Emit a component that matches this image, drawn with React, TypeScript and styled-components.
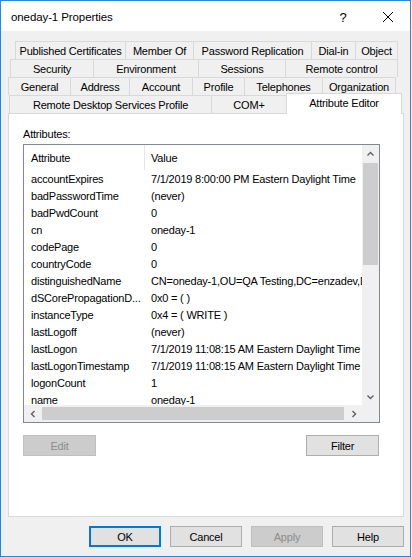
import React from "react";
import styled, { createGlobalStyle } from "styled-components";

const GlobalStyle = createGlobalStyle`
  html, body { margin: 0; padding: 0; background: #ffffff; }
  body { font-family: "Liberation Sans", Arial, sans-serif; }
  * { box-sizing: border-box; }
`;

const Window = styled.div`
  width: 411px;
  height: 557px;
  border: 1px solid #2b88d8;
  background: #f0f0f0;
  display: flex;
  flex-direction: column;
  font-family: "Liberation Sans", Arial, sans-serif;
  font-size: 11px;
  letter-spacing: -0.2px;
  color: #000;
`;

const TitleBar = styled.div`
  height: 30px;
  background: #ffffff;
  display: flex;
  align-items: center;
  padding: 2px 0 0 10px;
`;

const Title = styled.div`
  flex: 1;
  font-size: 11.5px;
  letter-spacing: -0.1px;
`;

const HelpGlyph = styled.div`
  width: 12px;
  font-size: 13px;
  margin-right: 33px;
  text-align: center;
`;

const CloseBox = styled.div`
  width: 12px;
  height: 12px;
  margin-right: 16px;
  display: flex;
`;

const Body = styled.div`
  padding: 10px 6px 0 7px;
  display: flex;
  flex-direction: column;
`;

const TabRow = styled.div<{ $indent: number }>`
  display: flex;
  height: 18px;
  padding-left: ${(p) => p.$indent}px;
`;

const Tab = styled.div<{ $w: number; $selected?: boolean }>`
  width: ${(p) => p.$w}px;
  flex: none;
  height: ${(p) => (p.$selected ? 21 : 18)}px;
  margin-top: ${(p) => (p.$selected ? -2 : 0)}px;
  margin-right: -1px;
  border: 1px solid #d9d9d9;
  border-bottom: none;
  background: ${(p) => (p.$selected ? "#ffffff" : "#f0f0f0")};
  position: ${(p) => (p.$selected ? "relative" : "static")};
  z-index: ${(p) => (p.$selected ? 1 : 0)};
  display: flex;
  align-items: ${(p) => (p.$selected ? "flex-start" : "center")};
  padding-top: ${(p) => (p.$selected ? 2 : 0)}px;
  justify-content: center;
  white-space: nowrap;
  line-height: 14px;
`;

const Panel = styled.div`
  height: 404px;
  background: #ffffff;
  border: 1px solid #d9d9d9;
  padding: 13px 24px 0 14px;
  display: flex;
  flex-direction: column;
`;

const Label = styled.div`
  height: 17px;
  line-height: 14px;
`;

const ListBox = styled.div`
  width: 357px;
  height: 279px;
  border: 1px solid #828790;
  display: grid;
  grid-template-columns: 338px 17px;
  grid-template-rows: 260px 17px;
  background: #ffffff;
`;

const ListView = styled.div`
  overflow: hidden;
  display: flex;
  flex-direction: column;
`;

const HeaderRow = styled.div`
  height: 25px;
  flex: none;
  display: flex;
  align-items: center;
`;

const HeaderCell = styled.div<{ $w?: number; $first?: boolean }>`
  width: ${(p) => (p.$w ? `${p.$w}px` : "auto")};
  flex: ${(p) => (p.$w ? "none" : "1")};
  height: 25px;
  display: flex;
  align-items: center;
  padding-left: ${(p) => (p.$first ? 7 : 6)}px;
  border-right: ${(p) => (p.$first ? "1px solid #e5e5e5" : "none")};
`;

const Row = styled.div`
  height: 17px;
  flex: none;
  display: flex;
  align-items: center;
  white-space: nowrap;
`;

const AttrCell = styled.div`
  width: 121px;
  flex: none;
  padding-left: 7px;
  overflow: hidden;
`;

const ValueCell = styled.div`
  padding-left: 6px;
  flex: none;
  letter-spacing: -0.2px;
`;

const VScroll = styled.div`
  background: #f0f0f0;
  display: flex;
  flex-direction: column;
`;

const HScroll = styled.div`
  background: #f0f0f0;
  display: flex;
  flex-direction: row;
`;

const Corner = styled.div`
  background: #f0f0f0;
`;

const ArrowBox = styled.div`
  width: 17px;
  height: 17px;
  flex: none;
  display: flex;
  align-items: center;
  justify-content: center;
`;

const Track = styled.div`
  flex: 1;
  display: flex;
`;

const VThumb = styled.div<{ $h: number }>`
  width: 15px;
  height: ${(p) => p.$h}px;
  margin: 1px 1px 0 1px;
  background: #cdcdcd;
`;

const HThumb = styled.div<{ $w: number }>`
  width: ${(p) => p.$w}px;
  height: 13px;
  margin: 2px 0 0 1px;
  background: #cdcdcd;
`;

const ActionRow = styled.div`
  width: 356px;
  margin-top: 12px;
  display: flex;
  justify-content: space-between;
`;

const Button = styled.button<{ $default?: boolean }>`
  width: ${(p) => (p.$default ? 72 : 73)}px;
  height: 21px;
  padding: 0;
  font-family: "Liberation Sans", Arial, sans-serif;
  font-size: 11px;
  letter-spacing: -0.2px;
  color: #000;
  background: #e1e1e1;
  border: 1px solid ${(p) => (p.$default ? "#0078d7" : "#adadad")};
  box-shadow: ${(p) => (p.$default ? "inset 0 0 0 1px #0078d7" : "none")};
  &:disabled {
    background: #cccccc;
    border-color: #bfbfbf;
    color: #8c8c8c;
  }
`;

const Footer = styled.div`
  display: flex;
  justify-content: flex-end;
  gap: 9px;
  padding: 9px 6px 0 0;
  & > button {
    width: 72px;
  }
`;

const Chevron = ({ dir }: { dir: "up" | "down" | "left" | "right" }) => {
  const paths: Record<string, string> = {
    up: "M1.5 5.5 L4.5 2.5 L7.5 5.5",
    down: "M1.5 2.5 L4.5 5.5 L7.5 2.5",
    left: "M5.5 1 L2.5 4 L5.5 7",
    right: "M2.5 1 L5.5 4 L2.5 7",
  };
  const isV = dir === "up" || dir === "down";
  return (
    <svg width={isV ? 9 : 8} height={8} viewBox={isV ? "0 0 9 8" : "0 0 8 8"}>
      <path d={paths[dir]} fill="none" stroke="#606060" strokeWidth="1.4" />
    </svg>
  );
};

const tabRows: { indent: number; tabs: { label: string; w: number; selected?: boolean }[] }[] = [
  {
    indent: 7,
    tabs: [
      { label: "Published Certificates", w: 111 },
      { label: "Member Of", w: 69 },
      { label: "Password Replication", w: 119 },
      { label: "Dial-in", w: 45 },
      { label: "Object", w: 43 },
    ],
  },
  {
    indent: 2,
    tabs: [
      { label: "Security", w: 84 },
      { label: "Environment", w: 106 },
      { label: "Sessions", w: 88 },
      { label: "Remote control", w: 113 },
    ],
  },
  {
    indent: 0,
    tabs: [
      { label: "General", w: 63 },
      { label: "Address", w: 60 },
      { label: "Account", w: 64 },
      { label: "Profile", w: 53 },
      { label: "Telephones", w: 79 },
      { label: "Organization", w: 74 },
    ],
  },
  {
    indent: 1,
    tabs: [
      { label: "Remote Desktop Services Profile", w: 203 },
      { label: "COM+", w: 76 },
      { label: "Attribute Editor", w: 116, selected: true },
    ],
  },
];

const attributes: [string, string][] = [
  ["accountExpires", "7/1/2019 8:00:00 PM Eastern Daylight Time"],
  ["badPasswordTime", "(never)"],
  ["badPwdCount", "0"],
  ["cn", "oneday-1"],
  ["codePage", "0"],
  ["countryCode", "0"],
  ["distinguishedName", "CN=oneday-1,OU=QA Testing,DC=enzadev,DC=com"],
  ["dSCorePropagationD...", "0x0 = ( )"],
  ["instanceType", "0x4 = ( WRITE )"],
  ["lastLogoff", "(never)"],
  ["lastLogon", "7/1/2019 11:08:15 AM Eastern Daylight Time"],
  ["lastLogonTimestamp", "7/1/2019 11:08:15 AM Eastern Daylight Time"],
  ["logonCount", "1"],
  ["name", "oneday-1"],
];

export default function App() {
  return (
    <>
      <GlobalStyle />
      <Window>
        <TitleBar>
          <Title>oneday-1 Properties</Title>
          <HelpGlyph>?</HelpGlyph>
          <CloseBox>
            <svg width="12" height="12" viewBox="0 0 12 12">
              <path d="M1 1 L11 11 M11 1 L1 11" stroke="#000" strokeWidth="1" fill="none" />
            </svg>
          </CloseBox>
        </TitleBar>
        <Body>
          {tabRows.map((row, i) => (
            <TabRow key={i} $indent={row.indent}>
              {row.tabs.map((t) => (
                <Tab key={t.label} $w={t.w} $selected={t.selected}>
                  {t.label}
                </Tab>
              ))}
            </TabRow>
          ))}
          <Panel>
            <Label>Attributes:</Label>
            <ListBox>
              <ListView>
                <HeaderRow>
                  <HeaderCell $w={121} $first>
                    Attribute
                  </HeaderCell>
                  <HeaderCell>Value</HeaderCell>
                </HeaderRow>
                {attributes.map(([a, v]) => (
                  <Row key={a}>
                    <AttrCell>{a}</AttrCell>
                    <ValueCell>{v}</ValueCell>
                  </Row>
                ))}
              </ListView>
              <VScroll>
                <ArrowBox>
                  <Chevron dir="up" />
                </ArrowBox>
                <Track>
                  <VThumb $h={102} />
                </Track>
                <ArrowBox>
                  <Chevron dir="down" />
                </ArrowBox>
              </VScroll>
              <HScroll>
                <ArrowBox>
                  <Chevron dir="left" />
                </ArrowBox>
                <Track>
                  <HThumb $w={302} />
                </Track>
                <ArrowBox>
                  <Chevron dir="right" />
                </ArrowBox>
              </HScroll>
              <Corner />
            </ListBox>
            <ActionRow>
              <Button disabled>Edit</Button>
              <Button>Filter</Button>
            </ActionRow>
          </Panel>
        </Body>
        <Footer>
          <Button $default>OK</Button>
          <Button>Cancel</Button>
          <Button disabled>Apply</Button>
          <Button>Help</Button>
        </Footer>
      </Window>
    </>
  );
}
